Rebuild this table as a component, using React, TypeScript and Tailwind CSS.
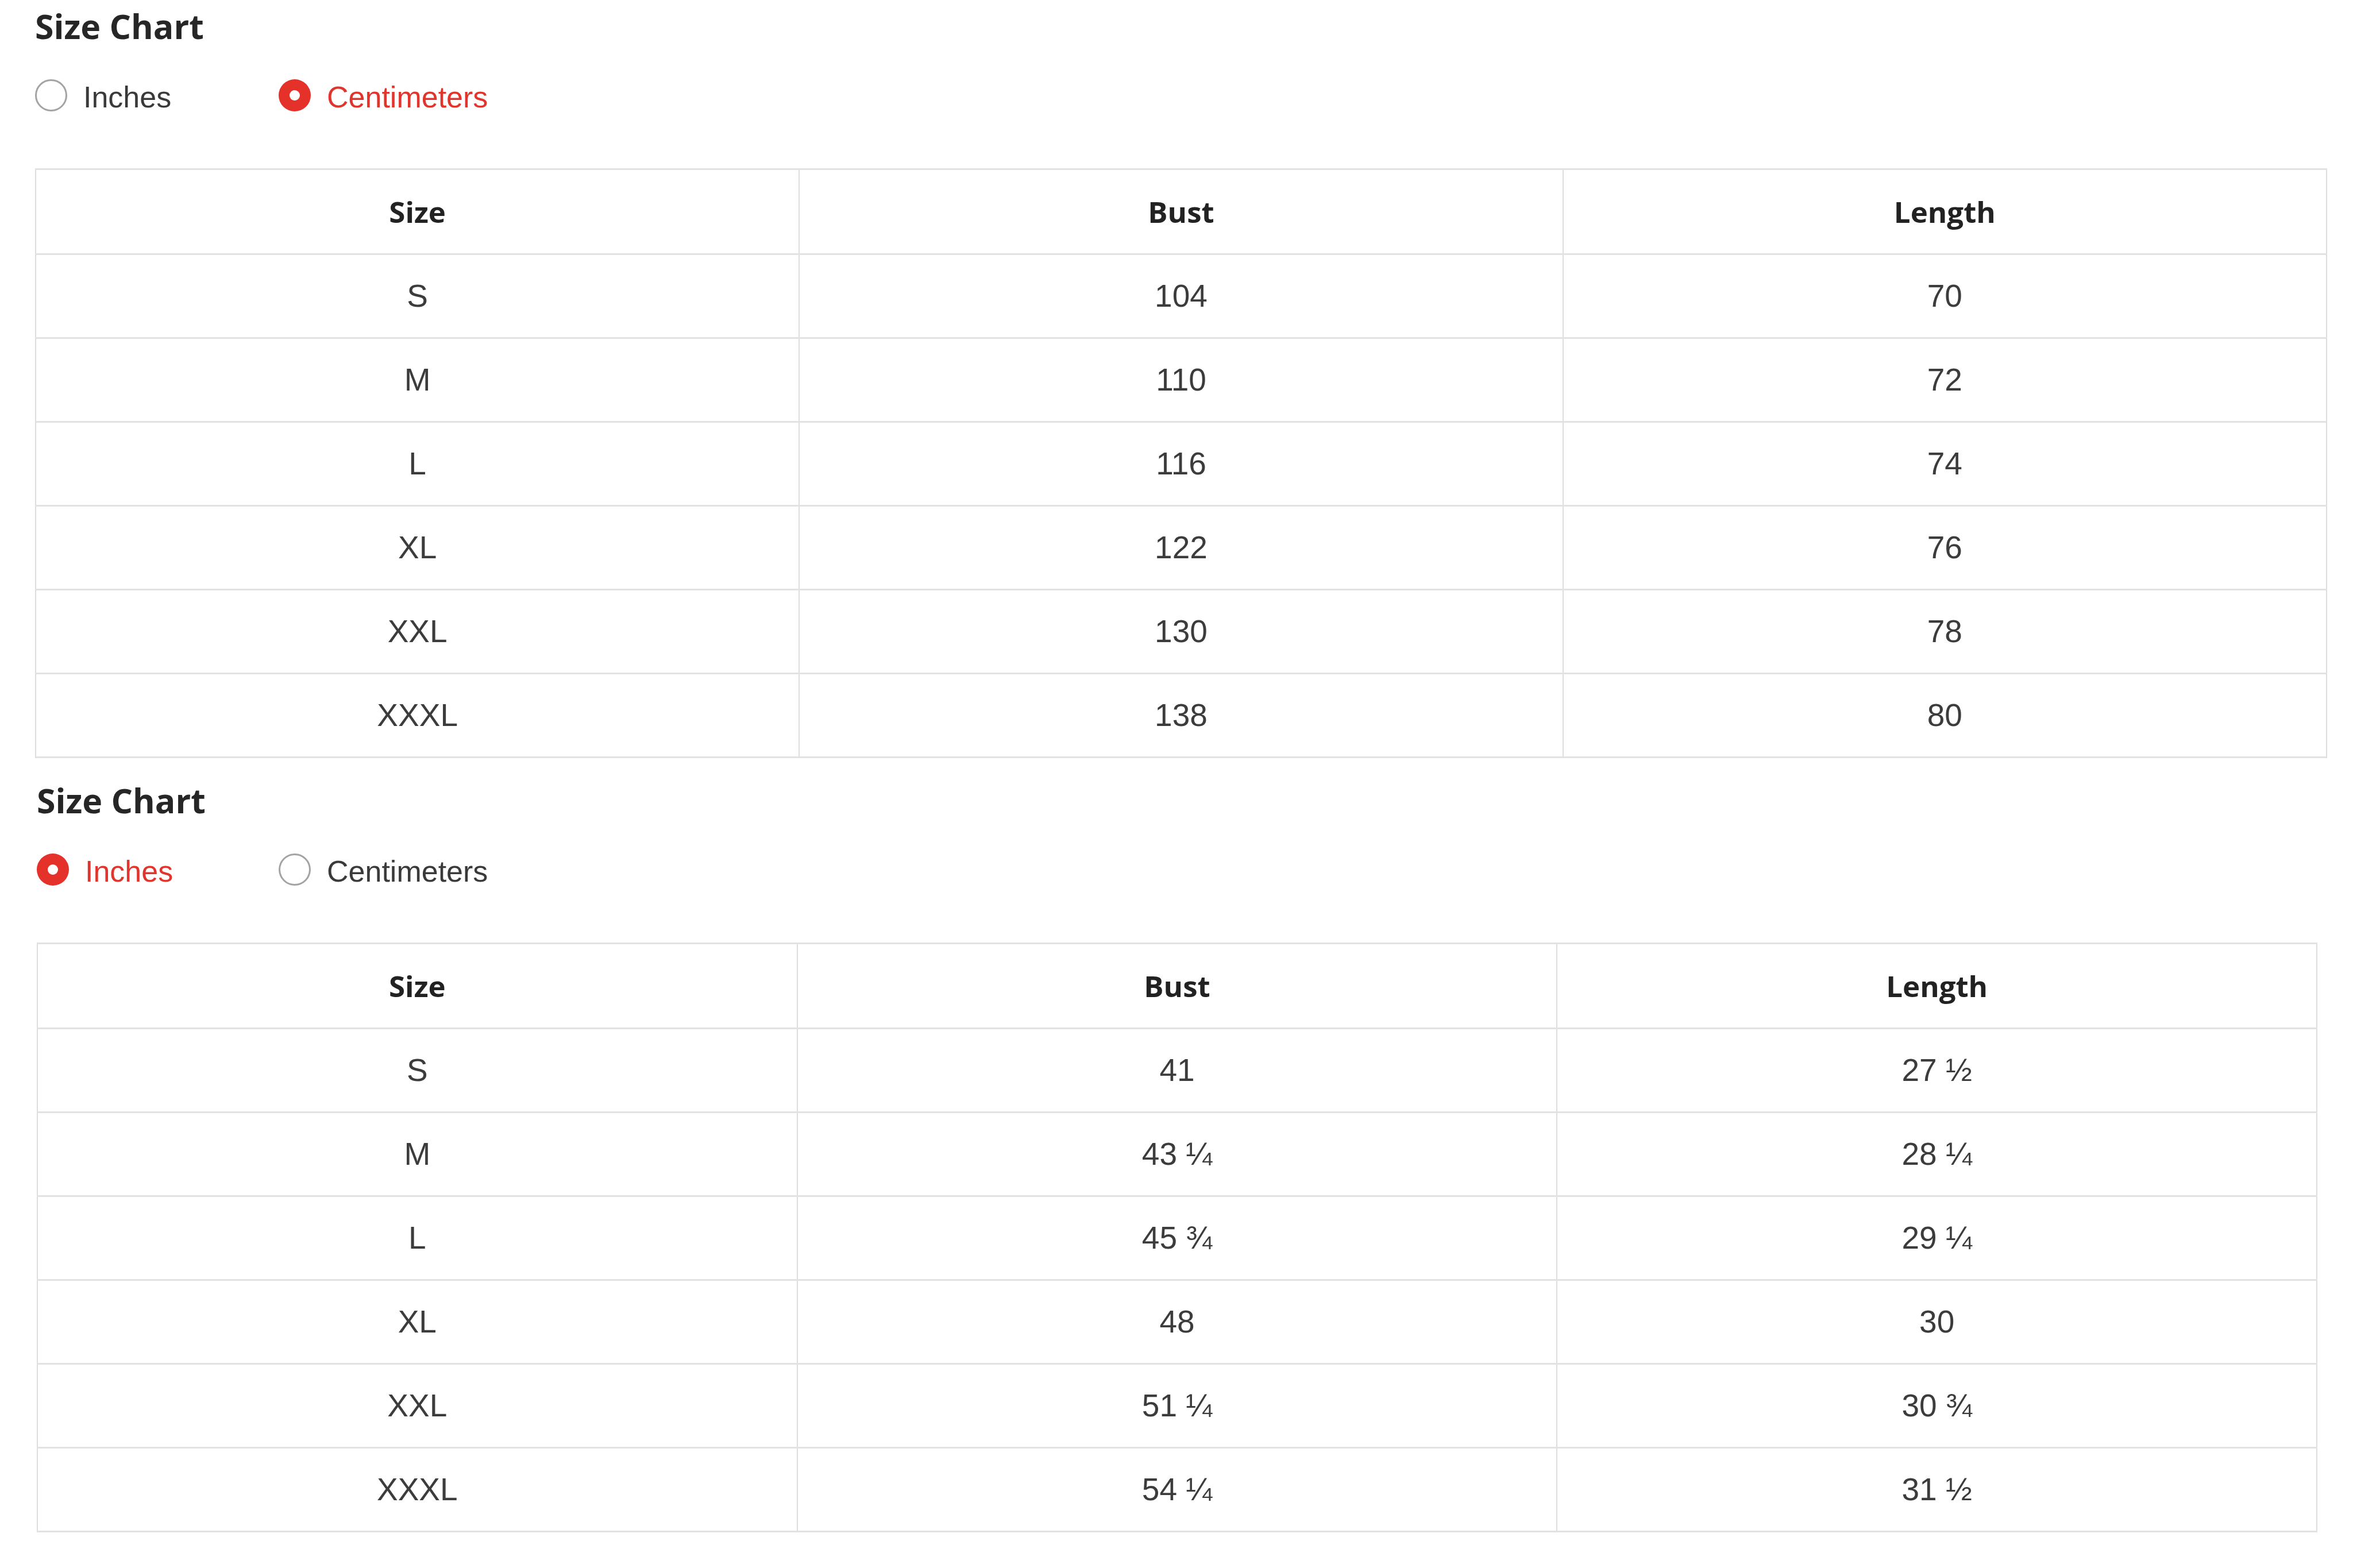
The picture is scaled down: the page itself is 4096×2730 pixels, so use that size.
import React from 'react';

type Row = [string, string, string];

const cmRows: Row[] = [
  ['S', '104', '70'],
  ['M', '110', '72'],
  ['L', '116', '74'],
  ['XL', '122', '76'],
  ['XXL', '130', '78'],
  ['XXXL', '138', '80'],
];

const inchRows: Row[] = [
  ['S', '41', '27 ½'],
  ['M', '43 ¼', '28 ¼'],
  ['L', '45 ¾', '29 ¼'],
  ['XL', '48', '30'],
  ['XXL', '51 ¼', '30 ¾'],
  ['XXXL', '54 ¼', '31 ½'],
];

const Radio = ({ label, checked, className }: { label: string; checked: boolean; className: string }) => (
  <label className={`flex items-center gap-[28px] ${className}`}>
    {checked ? (
      <span className="flex items-center justify-center w-[56px] h-[56px] rounded-full bg-[#e4322a] -mt-[6px]">
        <span className="w-[18px] h-[18px] rounded-full bg-white" />
      </span>
    ) : (
      <span className="w-[56px] h-[56px] rounded-full border-[3px] border-[#a3a3a3] bg-white -mt-[6px]" />
    )}
    <span
      className={`text-[52px] leading-[58px] font-['Liberation_Sans',Arial,sans-serif] ${
        checked ? 'text-[#e0352d]' : 'text-[#3a3a3a]'
      }`}
    >
      {label}
    </span>
  </label>
);

const SizeChart = ({
  inches,
  rows,
  radioWidth,
  tableWidth,
}: {
  inches: boolean;
  rows: Row[];
  radioWidth: string;
  tableWidth: string;
}) => (
  <div>
    <h2 className="pt-[5px] text-[59px] leading-[80px] font-bold text-[#262626] font-['Open_Sans',sans-serif]">
      Size Chart
    </h2>

    {/* unit toggle */}
    <div className="flex mt-[55px]">
      <Radio label="Inches" checked={inches} className={radioWidth} />
      <Radio label="Centimeters" checked={!inches} className="" />
    </div>

    <table className={`mt-[95px] table-fixed border-collapse ${tableWidth}`}>
      <thead>
        <tr>
          {['Size', 'Bust', 'Length'].map((h) => (
            <th
              key={h}
              className="h-[148px] border-y-[3px] border-y-[#e2e2e2] border-x-[2px] border-x-[#dddddd] text-center align-middle text-[51px] font-bold text-[#222] font-['Open_Sans',sans-serif]"
            >
              {h}
            </th>
          ))}
        </tr>
      </thead>
      <tbody>
        {rows.map((r) => (
          <tr key={r[0]}>
            {r.map((c, i) => (
              <td
                key={i}
                className="h-[146px] border-y-[3px] border-y-[#e2e2e2] border-x-[2px] border-x-[#dddddd] text-center align-middle text-[55px] text-[#3c3c3c] font-['Liberation_Sans',Arial,sans-serif]"
              >
                {c}
              </td>
            ))}
          </tr>
        ))}
      </tbody>
    </table>
  </div>
);

export default function App() {
  return (
    <div className="w-[4096px] h-[2730px] bg-white">
      <div className="pl-[61px]">
        <SizeChart inches={false} rows={cmRows} radioWidth="w-[424px]" tableWidth="w-[3990px]" />
      </div>
      <div className="pl-[64px] mt-[28px]">
        <SizeChart inches={true} rows={inchRows} radioWidth="w-[421px]" tableWidth="w-[3970px]" />
      </div>
    </div>
  );
}
